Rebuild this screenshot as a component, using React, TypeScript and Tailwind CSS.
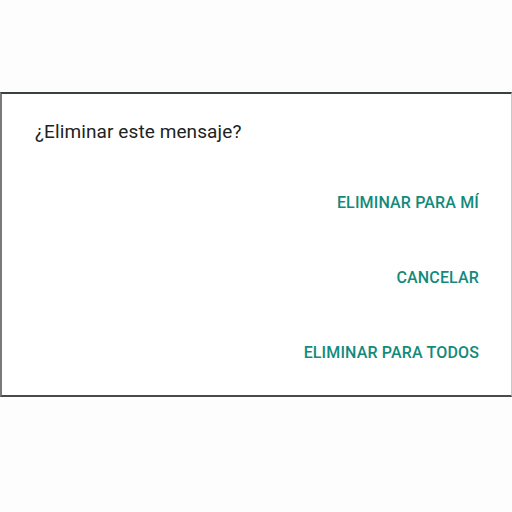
import React from "react";

const actions = ["ELIMINAR PARA MÍ", "CANCELAR", "ELIMINAR PARA TODOS"];

const DeleteDialog = () => {
  return (
    <div className="w-[512px] h-[512px] bg-[#fdfdfd] flex flex-col" style={{ fontFamily: "Roboto, 'Noto Sans', sans-serif" }}>
      <div className="h-[92px] shrink-0" />
      <div className="h-[305px] bg-white border-t-2 border-t-[#3a4040] border-b-2 border-b-[#4a4a4a] border-l-2 border-l-[#7a7a7a] border-r border-r-[#c8c8c8] flex flex-col">
        <h3 className="pl-[33px] pt-[26px] text-[19px] leading-6 tracking-[0.1px] text-[#222222]">¿Eliminar este mensaje?</h3>
        <div className="flex flex-col items-end pr-[32px] mt-[49px] gap-[55px]">
          {actions.map((label) => (
            <button key={label} className="text-[16px] leading-5 font-medium tracking-[0.15px] text-[#138a7c]" type="button">
              {label}
            </button>
          ))}
        </div>
      </div>
    </div>
  );
};

export default function App() {
  return <DeleteDialog />;
}
